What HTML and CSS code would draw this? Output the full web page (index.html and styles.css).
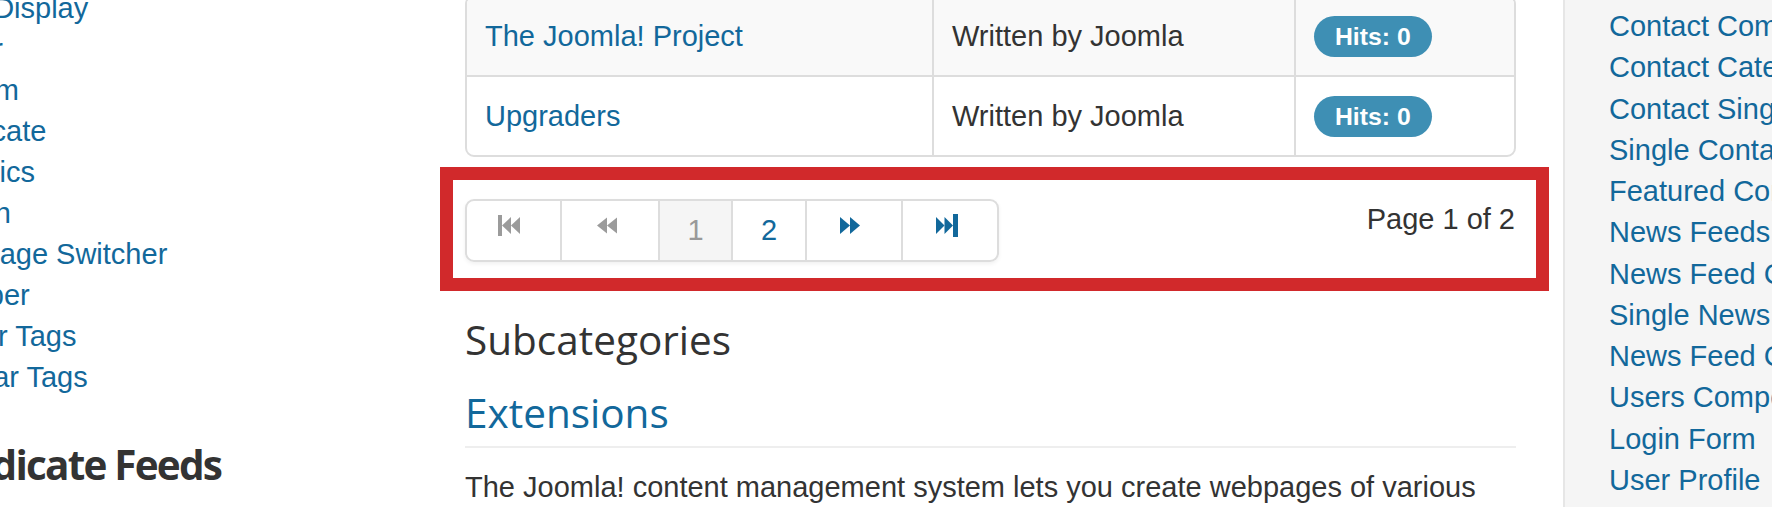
FILE: index.html
```html
<!DOCTYPE html>
<html lang="en">
<head>
<meta charset="utf-8">
<title>Category List</title>
<link rel="stylesheet" href="styles.css">
</head>
<body>
<div class="page">
  <aside class="side-left">
    <ul class="nav-list">
      <li><a href="#">Feed Display</a></li>
      <li><a href="#">Footer</a></li>
      <li><a href="#">Custom</a></li>
      <li><a href="#">Syndicate</a></li>
      <li><a href="#">Statistics</a></li>
      <li><a href="#">Search</a></li>
      <li><a href="#">Language Switcher</a></li>
      <li><a href="#">Wrapper</a></li>
      <li><a href="#">Similar Tags</a></li>
      <li><a href="#">Popular Tags</a></li>
    </ul>
    <h3 class="module-title">Syndicate Feeds</h3>
  </aside>

  <main class="content">
    <table class="cat-table">
      <colgroup><col class="col-title"><col class="col-author"><col class="col-hits"></colgroup>
      <tbody>
        <tr class="row-odd">
          <td><a href="#">The Joomla! Project</a></td>
          <td>Written by Joomla</td>
          <td><span class="badge">Hits: 0</span></td>
        </tr>
        <tr class="row-even">
          <td><a href="#">Upgraders</a></td>
          <td>Written by Joomla</td>
          <td><span class="badge">Hits: 0</span></td>
        </tr>
      </tbody>
    </table>

    <div class="highlight">
      <ul class="pager">
        <li><span class="pg-item pg-disabled ico ico-first"><svg width="22" height="23" viewBox="0 0 22 23"><rect x="0" y="1" width="4" height="21"/><polygon points="13,3 4,11.5 13,20"/><polygon points="22,3 13,11.5 22,20"/></svg></span></li>
        <li><span class="pg-item pg-disabled ico ico-prev"><svg width="20" height="23" viewBox="0 0 20 23"><polygon points="10,3.5 0,11.5 10,19.5"/><polygon points="20,3.5 10,11.5 20,19.5"/></svg></span></li>
        <li><span class="pg-item pg-active num num-1">1</span></li>
        <li><a class="pg-item num num-2" href="#">2</a></li>
        <li><a class="pg-item ico" href="#"><svg width="20" height="23" viewBox="0 0 20 23"><polygon points="0,3 10,11.5 0,20"/><polygon points="10,3 20,11.5 10,20"/></svg></a></li>
        <li><a class="pg-item ico" href="#"><svg width="22" height="23" viewBox="0 0 22 23"><polygon points="0,3 8.5,11.5 0,20"/><polygon points="8.5,3 17,11.5 8.5,20"/><rect x="17" y="0" width="5" height="23"/></svg></a></li>
      </ul>
      <p class="counter">Page 1 of 2</p>
    </div>

    <h3 class="section-title">Subcategories</h3>
    <div class="page-header">
      <h3 class="section-title"><a href="#">Extensions</a></h3>
    </div>
    <p class="intro">The Joomla! content management system lets you create webpages of various types using extensions. There are 5 basic types of extensions: components, modules, templates, languages, and plugins.</p>
  </main>

  <aside class="side-right">
    <ul class="nav-list">
      <li><a href="#">Contact Component</a></li>
      <li><a href="#">Contact Categories</a></li>
      <li><a href="#">Contact Single Category</a></li>
      <li><a href="#">Single Contact</a></li>
      <li><a href="#">Featured Contacts</a></li>
      <li><a href="#">News Feeds Component</a></li>
      <li><a href="#">News Feed Categories</a></li>
      <li><a href="#">Single News Feed Category</a></li>
      <li><a href="#">News Feed Category</a></li>
      <li><a href="#">Users Component</a></li>
      <li><a href="#">Login Form</a></li>
      <li><a href="#">User Profile</a></li>
    </ul>
  </aside>
</div>
</body>
</html>
```

FILE: styles.css
```css
html, body {
  margin: 0;
  padding: 0;
}

body {
  width: 1772px;
  height: 507px;
  overflow: hidden;
  background: #ffffff;
  font-family: "Liberation Sans", Arial, Helvetica, sans-serif;
  font-size: 29px;
  line-height: 40.5px;
  color: #333333;
}

a {
  color: #12689b;
  text-decoration: none;
}

.page {
  display: flex;
  align-items: flex-start;
  column-gap: 47px;
  margin-left: -81px;
}

/* left sidebar */
.side-left {
  flex: none;
  width: 499px;
  margin-top: -12px;
}

.nav-list {
  list-style: none;
  margin: 0;
  padding: 0;
  line-height: 41px;
  white-space: nowrap;
}

.module-title {
  margin: 44px 0 0 6px;
  font-family: "Open Sans", "Liberation Sans", sans-serif;
  font-size: 40.5px;
  line-height: 45px;
  font-weight: 700;
  letter-spacing: -1.8px;
  color: #333333;
  white-space: nowrap;
}

/* main column */
.content {
  flex: none;
  width: 1051px;
  margin-top: -5px;
}

.cat-table {
  width: 1051px;
  table-layout: fixed;
  border-collapse: separate;
  border-spacing: 0;
  border: 2px solid #dddddd;
  border-radius: 9px;
}

.col-title { width: 465px; }
.col-author { width: 362px; }
.col-hits { width: 220px; }

.cat-table td {
  padding: 18.5px 18px;
  line-height: 41px;
  vertical-align: top;
  border-left: 2px solid #dddddd;
  white-space: nowrap;
}

.cat-table td:first-child {
  border-left: 0;
}

.row-even td {
  border-top: 2px solid #dddddd;
}

.row-odd td {
  background: #f9f9f9;
}

.row-odd td:first-child {
  border-top-left-radius: 7px;
}

.row-odd td:last-child {
  border-top-right-radius: 7px;
}

.badge {
  display: inline-block;
  padding: 4px 21px;
  font-size: 24.75px;
  line-height: 33px;
  font-weight: 700;
  color: #ffffff;
  background: #3e8fb4;
  border-radius: 21px;
  vertical-align: top;
}

/* highlighted pagination block */
.highlight {
  display: flex;
  align-items: flex-start;
  margin: 10px -33px 0 -25px;
  padding: 19px 21px 16px 12px;
  border: 13px solid #d1292b;
}

.pager {
  display: flex;
  list-style: none;
  margin: 0;
  padding: 0;
  border-radius: 9px;
  box-shadow: 0 2px 4px rgba(0, 0, 0, 0.06);
}

.pg-item {
  display: flex;
  align-items: flex-start;
  box-sizing: border-box;
  height: 63px;
  padding: 9px 0;
  line-height: 41px;
  border: 2px solid #dddddd;
  border-left-width: 0;
  background: #ffffff;
}

.pager li:first-child .pg-item {
  border-left-width: 2px;
  border-radius: 9px 0 0 9px;
}

.pager li:last-child .pg-item {
  border-radius: 0 9px 9px 0;
}

.ico {
  width: 96px;
  padding: 13px 0 0 33px;
}

.ico svg {
  fill: #12689b;
}

.ico-first {
  width: 97px;
  padding-left: 31px;
}

.ico-prev {
  width: 98px;
  padding-left: 35px;
}

.pg-disabled svg {
  fill: #9b9b9b;
}

.num {
  justify-content: center;
}

.num-1 { width: 73px; }
.num-2 { width: 74px; }

.pg-active {
  background: #f5f5f5;
  color: #999999;
}

.counter {
  margin: 0 0 0 auto;
  line-height: 41px;
  color: #333333;
}

.section-title {
  margin: 26px 0 0;
  font-family: "Open Sans", "Liberation Sans", sans-serif;
  font-size: 40.5px;
  line-height: 45px;
  font-weight: 500;
  color: #333333;
}

.page-header {
  margin-top: 28px;
  padding-bottom: 11px;
  border-bottom: 2px solid #eeeeee;
}

.page-header .section-title {
  margin: 0;
}

.intro {
  margin: 19px 0 0;
  line-height: 40.5px;
}

/* right sidebar */
.side-right {
  flex: none;
  width: 400px;
  min-height: 560px;
  box-sizing: border-box;
  padding: 6px 0 0 44px;
  background: #f5f5f5;
  border-left: 2px solid #e6e6e6;
}

.side-right .nav-list {
  line-height: 41.25px;
}
```
